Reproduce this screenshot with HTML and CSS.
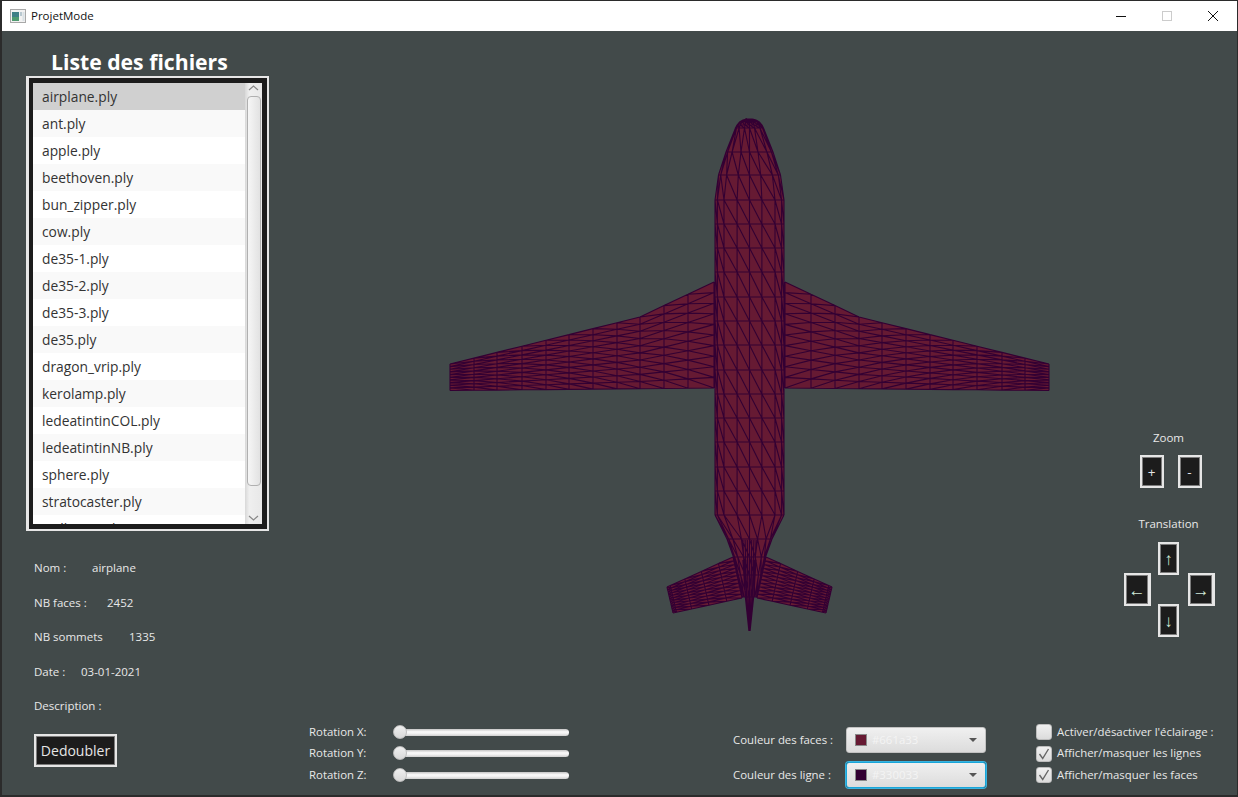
FILE: index.html
```html
<!DOCTYPE html>
<html lang="fr">
<head>
<meta charset="utf-8">
<title>ProjetMode</title>
<link rel="stylesheet" href="styles.css">
</head>
<body>
<div class="window">
  <header class="titlebar">
    <svg class="app-icon" viewBox="0 0 16 14" width="16" height="14">
      <rect x="0.5" y="0.5" width="15" height="13" fill="#f2f2f2" stroke="#a8a8a8"/>
      <rect x="2" y="3" width="7" height="9" fill="#3f7f86"/>
      <rect x="2" y="8" width="7" height="4" fill="#4f9a70"/>
      <rect x="10" y="3" width="2" height="4" fill="#b8c8d0"/>
      <rect x="12.5" y="3" width="2" height="9" fill="#d8e0e4"/>
    </svg>
    <span class="app-title">ProjetMode</span>
    <div class="win-controls">
      <svg class="win-btn" viewBox="0 0 46 30" width="46" height="30"><path d="M18 15.5h10" stroke="#111" fill="none"/></svg>
      <svg class="win-btn" viewBox="0 0 46 30" width="46" height="30"><rect x="18.5" y="10.5" width="9" height="9" stroke="#ccc" fill="none"/></svg>
      <svg class="win-btn" viewBox="0 0 46 30" width="46" height="30"><path d="M18 10l10 10M28 10l-10 10" stroke="#111" fill="none"/></svg>
    </div>
  </header>

  <div class="workspace">
    <aside class="sidebar">
      <h1 class="sidebar-title">Liste des fichiers</h1>
      <div class="listbox">
        <div class="listbox-inner">
          <ul class="file-list">
            <li class="file selected">airplane.ply</li>
            <li class="file odd">ant.ply</li>
            <li class="file">apple.ply</li>
            <li class="file odd">beethoven.ply</li>
            <li class="file">bun_zipper.ply</li>
            <li class="file odd">cow.ply</li>
            <li class="file">de35-1.ply</li>
            <li class="file odd">de35-2.ply</li>
            <li class="file">de35-3.ply</li>
            <li class="file odd">de35.ply</li>
            <li class="file">dragon_vrip.ply</li>
            <li class="file odd">kerolamp.ply</li>
            <li class="file">ledeatintinCOL.ply</li>
            <li class="file odd">ledeatintinNB.ply</li>
            <li class="file">sphere.ply</li>
            <li class="file odd">stratocaster.ply</li>
            <li class="file">walkman.ply</li>
          </ul>
          <div class="scrollbar">
            <svg class="chevron" viewBox="0 0 17 12" width="17" height="12"><path d="M4 8l4.5-4 4.5 4" stroke="#888" stroke-width="1.2" fill="none"/></svg>
            <div class="scroll-thumb"></div>
            <svg class="chevron" viewBox="0 0 17 12" width="17" height="12"><path d="M4 4l4.5 4 4.5-4" stroke="#888" stroke-width="1.2" fill="none"/></svg>
          </div>
        </div>
      </div>
      <dl class="info">
        <div class="info-row"><dt class="info-label label-nom">Nom :</dt><dd class="info-value">airplane</dd></div>
        <div class="info-row"><dt class="info-label label-faces">NB faces :</dt><dd class="info-value">2452</dd></div>
        <div class="info-row"><dt class="info-label label-sommets">NB sommets</dt><dd class="info-value">1335</dd></div>
        <div class="info-row"><dt class="info-label label-date">Date :</dt><dd class="info-value">03-01-2021</dd></div>
        <div class="info-row"><dt class="info-label">Description :</dt></div>
      </dl>
      <button class="dark-btn duplicate">Dedoubler</button>
    </aside>

    <main class="stage">
      <svg id="plane" class="plane" viewBox="292 31 808 681" width="808" height="681"></svg>
    </main>

    <section class="controls">
      <div class="ctl-label">Zoom</div>
      <div class="zoom-buttons">
        <button class="dark-btn small zoom-btn">+</button>
        <button class="dark-btn small zoom-btn">-</button>
      </div>
      <div class="ctl-label translation-label">Translation</div>
      <div class="dpad">
        <button class="dark-btn small arrow up">↑</button>
        <button class="dark-btn small arrow wide left">←</button>
        <button class="dark-btn small arrow wide right">→</button>
        <button class="dark-btn small arrow down">↓</button>
      </div>
    </section>

    <footer class="bottombar">
      <div class="sliders">
        <div class="slider-row"><span class="slider-label">Rotation X:</span><div class="slider"><span class="thumb"></span></div></div>
        <div class="slider-row"><span class="slider-label">Rotation Y:</span><div class="slider"><span class="thumb"></span></div></div>
        <div class="slider-row"><span class="slider-label">Rotation Z:</span><div class="slider"><span class="thumb"></span></div></div>
      </div>
      <div class="colors">
        <div class="color-row">
          <span class="color-label">Couleur des faces :</span>
          <div class="combo"><span class="swatch swatch-face"></span><span class="combo-text">#661a33</span><span class="combo-arrow"></span></div>
        </div>
        <div class="color-row">
          <span class="color-label">Couleur des ligne :</span>
          <div class="combo focused"><span class="swatch swatch-line"></span><span class="combo-text">#330033</span><span class="combo-arrow"></span></div>
        </div>
      </div>
      <div class="checks">
        <div class="check-row"><span class="checkbox"></span><span class="check-label">Activer/désactiver l'éclairage :</span></div>
        <div class="check-row"><span class="checkbox"><svg viewBox="0 0 16 16" width="16" height="16"><path d="M3.5 8l3.2 4.5L12.5 3" stroke="#666" stroke-width="1.4" fill="none"/></svg></span><span class="check-label">Afficher/masquer les lignes</span></div>
        <div class="check-row"><span class="checkbox"><svg viewBox="0 0 16 16" width="16" height="16"><path d="M3.5 8l3.2 4.5L12.5 3" stroke="#666" stroke-width="1.4" fill="none"/></svg></span><span class="check-label">Afficher/masquer les faces</span></div>
      </div>
    </footer>
  </div>
</div>
<script src="app.js"></script>
</body>
</html>
```
FILE: styles.css
```css
* { box-sizing: border-box; }
html, body { margin: 0; padding: 0; }
body {
  width: 1238px;
  height: 797px;
  overflow: hidden;
  background: #2a2a2a;
  font-family: "Open Sans", "Noto Sans", sans-serif;
}
.window {
  width: 1238px;
  height: 797px;
  display: flex;
  flex-direction: column;
  border-top: 1px solid #2b2b2b;
  border-left: 2px solid #2b2b2b;
  border-right: 1px solid #2b2b2b;
  border-bottom: 2px solid #2b2b2b;
  background: #424a4a;
}
.titlebar {
  height: 30px;
  flex: none;
  background: #fff;
  display: flex;
  align-items: center;
  padding-left: 8px;
}
.app-icon { flex: none; }
.app-title {
  margin-left: 5px;
  padding-bottom: 2px;
  font-size: 11.5px;
  color: #111;
}
.win-controls { margin-left: auto; display: flex; padding-right: 1px; }
.win-btn { display: block; }

.workspace {
  flex: 1;
  min-height: 0;
  display: grid;
  grid-template-columns: 290px 808px 1fr;
  grid-template-rows: 681px 1fr;
}
.sidebar {
  grid-row: 1 / 3;
  display: flex;
  flex-direction: column;
  align-items: flex-start;
  padding-left: 24px;
}
.sidebar-title {
  margin: 16px 0 0 25px;
  height: 29px;
  font-size: 21.2px;
  line-height: 30px;
  font-weight: 700;
  color: #fff;
  white-space: nowrap;
}
.listbox {
  width: 243px;
  height: 455px;
  border: 2px solid #e6e6e6;
  border-left-width: 3px;
  background: #1c1c1c;
  padding: 5px 5px 5px 4px;
}
.listbox-inner {
  width: 229px;
  height: 441px;
  display: flex;
  overflow: hidden;
  background: #fff;
}
.file-list {
  list-style: none;
  margin: 0;
  padding: 0;
  width: 212px;
  height: 441px;
  overflow: hidden;
  flex: none;
}
.file {
  height: 27px;
  line-height: 27px;
  padding-left: 9px;
  font-size: 13.8px;
  color: #333;
  background: #fff;
}
.file.odd { background: #f9f9f9; }
.file.selected { background: #d0d0d0; }
.scrollbar {
  flex: 1;
  background: linear-gradient(90deg, #d8d8d8, #efefef 25%, #e8e8e8);
  display: flex;
  flex-direction: column;
  align-items: center;
  justify-content: space-between;
}
.chevron { display: block; flex: none; }
.chevron:first-child { margin-top: -1px; }
.scroll-thumb {
  width: 14px;
  flex: 1;
  margin: 2px 0 26px;
  border: 1px solid #b0b0b0;
  border-radius: 4px;
  background: linear-gradient(90deg, #f6f6f6, #e2e2e2);
}
.info { margin: 28px 0 0 8px; display: flex; flex-direction: column; gap: 17.5px; }
.info-row { display: flex; height: 17px; align-items: center; font-size: 11.5px; color: #e8e8e8; }
.info-label, .info-value { margin: 0; white-space: nowrap; }
.label-nom { width: 58px; }
.label-faces { width: 73px; }
.label-sommets { width: 95px; }
.label-date { width: 47px; }

.dark-btn {
  background: #1c1c1c;
  border: 2px solid #e6e6e6;
  box-shadow: inset 0 0 0 1px #7c7c7c;
  color: #e6e6e6;
  font-family: inherit;
  padding: 0;
  display: block;
}
.duplicate {
  margin: 19.5px 0 0 8px;
  width: 83px;
  height: 33px;
  font-size: 14px;
}
.stage { min-width: 0; min-height: 0; }
.plane { display: block; }

.controls {
  display: flex;
  flex-direction: column;
  align-items: center;
  padding-top: 399px;
}
.ctl-label { height: 16px; line-height: 16px; font-size: 11.5px; color: #e8e8e8; }
.zoom-buttons { display: flex; gap: 14px; margin-top: 9px; padding-left: 4px; }
.small { font-size: 13.5px; }
.zoom-btn { width: 24px; height: 33px; }
.translation-label { margin-top: 28px; }
.dpad {
  margin-top: 10px;
  padding-left: 2px;
  display: grid;
  grid-template-columns: 34px 30px 27px;
  grid-template-rows: 31px 31px 33px;
}
.arrow { width: 21px; height: 33px; font-size: 17px; line-height: 1; color: #cfe8d8; }
.wide { width: 27px; border-right-width: 3px; }
.up { grid-column: 2; grid-row: 1; }
.left { grid-column: 1; grid-row: 2; }
.right { grid-column: 3; grid-row: 2; }
.down { grid-column: 2; grid-row: 3; }

.bottombar {
  grid-column: 2 / 4;
  grid-row: 2;
  display: flex;
  align-items: center;
  padding-left: 17px;
  font-size: 11.4px;
  color: #e8e8e8;
}
.sliders { width: 260px; flex: none; }
.slider-row { display: flex; align-items: center; height: 21.5px; }
.slider-label { width: 85px; flex: none; white-space: nowrap; padding-bottom: 2px; }
.slider {
  position: relative;
  width: 175px;
  height: 7px;
  border-radius: 4px;
  background: linear-gradient(#c4c4c4, #fbfbfb 40%, #f0f0f0 65%, #cfcfcf);
}
.thumb {
  position: absolute;
  left: -1px;
  top: -4px;
  width: 14px;
  height: 14px;
  border-radius: 50%;
  background: linear-gradient(#efefef, #d8d8d8);
  border: 1px solid #bdbdbd;
}
.colors {
  width: 253px;
  margin-left: 164px;
  margin-top: 7px;
  flex: none;
  display: flex;
  flex-direction: column;
  gap: 9px;
}
.color-row { display: flex; align-items: center; }
.color-label { width: 113px; flex: none; white-space: nowrap; }
.combo {
  width: 140px;
  height: 26px;
  display: flex;
  align-items: center;
  padding-left: 8px;
  border: 1px solid #c2c2c2;
  border-radius: 3px;
  background: linear-gradient(#f0f0f0, #dcdcdc);
}
.combo.focused { border: 1px solid #1aa5d8; box-shadow: 0 0 0 1px #39b4e0; }
.swatch { width: 12px; height: 12px; flex: none; border: 1px solid #8a8a8a; }
.swatch-face { background: #661a33; }
.swatch-line { background: #330033; }
.combo-text { margin-left: 5px; color: #f4f4f4; }
.combo-arrow {
  margin-left: auto;
  margin-right: 8px;
  width: 0;
  height: 0;
  border-left: 4px solid transparent;
  border-right: 4px solid transparent;
  border-top: 4px solid #555;
}
.checks { margin-left: 50px; flex: none; }
.check-row { display: flex; align-items: center; height: 21.5px; }
.checkbox {
  width: 16px;
  height: 16px;
  flex: none;
  border: 1px solid #bdbdbd;
  border-radius: 3px;
  background: linear-gradient(#f0f0f0, #dcdcdc);
  display: block;
}
.checkbox svg { display: block; margin: -1px; }
.check-label { margin-left: 5px; padding-bottom: 2px; white-space: nowrap; }
```
FILE: app.js
```js
(function () {
  var svg = document.getElementById('plane');
  var NS = 'http://www.w3.org/2000/svg';
  var fillD = '';
  var lineD = '';
  var FACE = '#661a33';
  var LINE = '#330033';

  function m(p) { return 'M' + p[0].toFixed(1) + ' ' + p[1].toFixed(1); }
  function l(p) { return 'L' + p[0].toFixed(1) + ' ' + p[1].toFixed(1); }
  function seg(a, b) { lineD += m(a) + l(b); }
  function mirror(p) { return [1499 - p[0], p[1]]; }
  function lerp(a, b, t) { return a + (b - a) * t; }

  // grid[i][j]: i along one axis, j across; draws quads, grid lines, one diagonal per cell
  function mesh(grid) {
    for (var i = 0; i < grid.length - 1; i++) {
      for (var j = 0; j < grid[i].length - 1; j++) {
        var a = grid[i][j], b = grid[i + 1][j], c = grid[i + 1][j + 1], d = grid[i][j + 1];
        fillD += m(a) + l(b) + l(c) + l(d) + 'Z';
        seg(a, b);
        seg(a, d);
        seg(a, c);
      }
      seg(grid[i][grid[i].length - 1], grid[i + 1][grid[i].length - 1]);
    }
    var last = grid[grid.length - 1];
    for (var k = 0; k < last.length - 1; k++) { seg(last[k], last[k + 1]); }
  }

  function mapGrid(grid, fn) {
    return grid.map(function (row) { return row.map(fn); });
  }

  // Wings
  var stations = [450, 474, 497, 522, 546, 569, 593, 617, 640, 664, 688, 714];
  function wingTop(x) {
    if (x > 640) { return lerp(317, 282, (x - 640) / 74); }
    return lerp(364, 317, (x - 450) / 190);
  }
  function wingBottom(x) {
    return lerp(390.5, 388, (x - 450) / 264);
  }
  var wing = stations.map(function (x) {
    var row = [];
    for (var j = 0; j <= 10; j++) {
      row.push([x, lerp(wingTop(x), wingBottom(x), j / 10)]);
    }
    return row;
  });
  mesh(wing);
  mesh(mapGrid(wing, mirror));

  // Tail planes
  var tail = [];
  var tailStations = [0, 0.05, 0.27, 0.52, 0.78, 1];
  tailStations.forEach(function (t) {
    var top = [lerp(667, 733, t), lerp(587, 557, t)];
    var bot = [lerp(673, 742, t), lerp(613, 598, t)];
    var row = [];
    for (var j = 0; j <= 11; j++) {
      var s = j / 11;
      row.push([lerp(top[0], bot[0], s), lerp(top[1], bot[1], s)]);
    }
    tail.push(row);
  });
  mesh(tail);
  mesh(mapGrid(tail, mirror));

  // Fuselage
  var rings = [[119, 3], [120, 6.5], [122, 10], [125, 12.5], [128, 14], [152, 23.5], [175, 31], [200, 34.5]];
  var ys = [224, 248, 272, 297, 321, 345, 370, 394, 418, 442, 467, 491, 515];
  ys.forEach(function (y) { rings.push([y, 34.5]); });
  rings.push([539, 22.5], [557, 16], [575, 12], [597, 7.5]);
  var cols = [-1, -0.93, -0.74, -0.36, 0, 0.36, 0.74, 0.93, 1];
  var cx = 749.5;
  var body = rings.map(function (r) {
    return cols.map(function (c) { return [cx + c * r[1], r[0]]; });
  });
  mesh(body);

  // Dense rear core and fin
  [-3, -2, -1, 0, 1, 2, 3].forEach(function (k) {
    seg([cx + k * 2.2, 540], [cx + k * 1.4, 597]);
    seg([cx + k * 1.4, 597], [cx + k * 0.2, 631]);
    seg([cx + k * 1.4, 597], [cx + k * 2.2, 560]);
  });
  fillD += 'M745.5 597L753.5 597L750 631L749 631Z';
  seg([745.5, 597], [749, 631]);
  seg([753.5, 597], [750, 631]);

  // Dense nose cap
  [0.2, 0.4, 0.6, 0.8].forEach(function (t) {
    seg([cx - 10 * t, 121 + 2 * (1 - t)], [cx + 10 * t, 121 + 2 * (1 - t)]);
  });

  var fill = document.createElementNS(NS, 'path');
  fill.setAttribute('d', fillD);
  fill.setAttribute('fill', FACE);
  svg.appendChild(fill);
  var lines = document.createElementNS(NS, 'path');
  lines.setAttribute('d', lineD);
  lines.setAttribute('fill', 'none');
  lines.setAttribute('stroke', LINE);
  lines.setAttribute('stroke-width', '1.1');
  svg.appendChild(lines);
})();
```
